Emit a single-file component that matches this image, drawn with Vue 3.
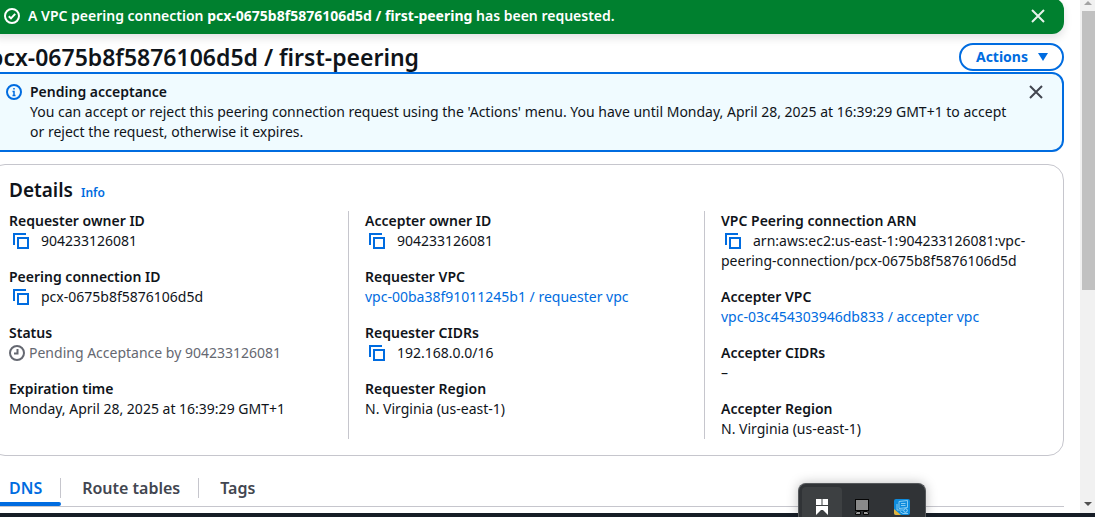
<script setup>
const columns = [
  [
    { label: 'Requester owner ID', value: '904233126081', kind: 'copy' },
    { label: 'Peering connection ID', value: 'pcx-0675b8f5876106d5d', kind: 'copy' },
    { label: 'Status', value: 'Pending Acceptance by 904233126081', kind: 'status' },
    { label: 'Expiration time', value: 'Monday, April 28, 2025 at 16:39:29 GMT+1' },
  ],
  [
    { label: 'Accepter owner ID', value: '904233126081', kind: 'copy' },
    { label: 'Requester VPC', value: 'vpc-00ba38f91011245b1 / requester vpc', kind: 'link' },
    { label: 'Requester CIDRs', value: '192.168.0.0/16', kind: 'copy' },
    { label: 'Requester Region', value: 'N. Virginia (us-east-1)' },
  ],
  [
    {
      label: 'VPC Peering connection ARN',
      value: 'arn:aws:ec2:us-east-1:904233126081:vpc-peering-connection/pcx-0675b8f5876106d5d',
      kind: 'copy',
    },
    { label: 'Accepter VPC', value: 'vpc-03c454303946db833 / accepter vpc', kind: 'link' },
    { label: 'Accepter CIDRs', value: '–' },
    { label: 'Accepter Region', value: 'N. Virginia (us-east-1)' },
  ],
]
const tabs = ['DNS', 'Route tables', 'Tags']
</script>

<template>
  <div class="screen">
    <div class="viewport">
      <main class="content">
        <div class="flash" role="status">
          <svg class="icon" viewBox="0 0 16 16" aria-hidden="true">
            <circle cx="8" cy="8" r="7" />
            <path d="M4.8 8.2 7 10.4 11.2 5.8" />
          </svg>
          <p class="flash-text">A VPC peering connection <b>pcx-0675b8f5876106d5d / first-peering</b> has been requested.</p>
          <button class="close" type="button" aria-label="Dismiss notification">
            <svg class="icon" viewBox="0 0 16 16" aria-hidden="true"><path d="M2 2 14 14M14 2 2 14" /></svg>
          </button>
        </div>

        <header class="page-header">
          <h1>pcx-0675b8f5876106d5d / first-peering</h1>
          <button class="actions" type="button">
            Actions
            <svg class="caret" viewBox="0 0 10 8" aria-hidden="true"><path d="M0 0H10L5 8Z" /></svg>
          </button>
        </header>

        <section class="alert">
          <svg class="icon" viewBox="0 0 16 16" aria-hidden="true">
            <circle cx="8" cy="8" r="7" />
            <path class="thin" d="M8 4V5.600M6.500 7.500H8V11.500M6.500 11.500H9.500" />
          </svg>
          <div class="alert-body">
            <h2>Pending acceptance</h2>
            <p>You can accept or reject this peering connection request using the 'Actions' menu. You have until Monday, April 28, 2025 at 16:39:29 GMT+1 to accept or reject the request, otherwise it expires.</p>
          </div>
          <button class="close" type="button" aria-label="Dismiss alert">
            <svg class="icon" viewBox="0 0 16 16" aria-hidden="true"><path d="M2 2 14 14M14 2 2 14" /></svg>
          </button>
        </section>

        <section class="details">
          <div class="details-head">
            <h2>Details</h2>
            <a href="#info">Info</a>
          </div>
          <div class="columns">
            <dl v-for="(column, i) in columns" :key="i" class="column">
              <div v-for="item in column" :key="item.label">
                <dt>{{ item.label }}</dt>
                <dd v-if="item.kind === 'copy'">
                  <button class="copy" type="button" :aria-label="'Copy ' + item.label">
                    <svg class="icon" viewBox="0 0 16 16" aria-hidden="true"><path d="M1 12V1H13M5 5H15V15H5Z" /></svg>
                  </button>{{ item.value }}
                </dd>
                <dd v-else-if="item.kind === 'link'"><a href="#vpc">{{ item.value }}</a></dd>
                <dd v-else-if="item.kind === 'status'" class="status">
                  <svg class="icon" viewBox="0 0 16 16" aria-hidden="true">
                    <circle cx="8" cy="8" r="7" />
                    <path d="M8.5 4V8.5H5" />
                  </svg>
                  {{ item.value }}
                </dd>
                <dd v-else>{{ item.value }}</dd>
              </div>
            </dl>
          </div>
        </section>

        <nav class="tabs" role="tablist">
          <button
            v-for="(tab, i) in tabs"
            :key="tab"
            class="tab"
            :class="{ active: i === 0 }"
            type="button"
            role="tab"
            :aria-selected="i === 0"
          ><span>{{ tab }}</span></button>
        </nav>
      </main>

      <div class="scrollbar" aria-hidden="true">
        <svg class="arrow up" viewBox="0 0 8 4"><path d="M0 4 4 0 8 4Z" /></svg>
        <div class="thumb"></div>
        <svg class="arrow" viewBox="0 0 8 4"><path d="M0 0 4 4 8 0Z" /></svg>
      </div>
    </div>

    <footer class="console-footer"></footer>

    <div class="dock">
      <button class="dock-item selected" type="button" aria-label="Start">
        <svg viewBox="0 0 16 16">
          <path fill="#fff" d="M2 0H7.500V6H2ZM8.500 0H14V6H8.500ZM2 7H7.500V10.500L2 16ZM8.500 7H14V16L8.500 10.500ZM7 7H9V11H7Z" />
        </svg>
      </button>
      <button class="dock-item" type="button" aria-label="Task view">
        <svg viewBox="0 0 16 16">
          <path fill="#050505" d="M1 0H15V12H1Z" />
          <path fill="#8a8a8a" d="M2 1H14V11H2Z" />
          <path fill="#9a9a9a" stroke="#050505" d="M3 12.500H6.500V15.500H1.500V14ZM9.500 12.500H13L14.500 14V15.500H9.500Z" />
        </svg>
      </button>
      <button class="dock-item" type="button" aria-label="Device settings">
        <svg viewBox="0 0 16 16">
          <rect width="16" height="16" rx="2" fill="#0d8bdd" />
          <path fill="#e2b33c" d="M0 10 7 16H2Q0 16 0 14Z" />
          <path fill="none" stroke="#a5dcf8" stroke-width="0.8" d="M5 2.500 13.500 1.500V8.500L5 9.500ZM3 5V11H9M7 4.500H11.500M7 6.500H11.500M6 12.500 9 14.500H14" />
          <circle cx="11.500" cy="11.500" r="1.800" fill="#0d8bdd" stroke="#a5dcf8" />
        </svg>
      </button>
    </div>
  </div>
</template>

<style>
body {
  margin: 0;
  background: #fff;
}
</style>

<style scoped>
.screen {
  position: relative;
  display: flex;
  flex-direction: column;
  height: 100vh;
  overflow: hidden;
  font: 14px/20px "Noto Sans", "Open Sans", sans-serif;
  color: #0f141a;
}
.viewport {
  display: flex;
  flex: 1;
  min-height: 0;
}
.content {
  flex: 1;
  min-width: 0;
  margin: -2px 16px 0 -11px;
}
h1, h2, p, dl, dd {
  margin: 0;
}
button {
  font: inherit;
  color: inherit;
  background: none;
  border: 0;
  padding: 0;
  cursor: pointer;
}
a {
  color: #006ce0;
  text-decoration: none;
}
.icon {
  display: block;
  flex: none;
  width: 16px;
  height: 16px;
  fill: none;
  stroke: currentColor;
  stroke-width: 2;
}
.thin {
  stroke-width: 1.5;
}
.flash {
  display: flex;
  align-items: center;
  gap: 8px;
  box-sizing: border-box;
  height: 36px;
  padding: 0 18px 0 15px;
  border-radius: 12px;
  background: #00802f;
  color: #fff;
  font-weight: 600;
  box-shadow: 0 4px 8px rgba(0, 7, 22, 0.12);
}
.flash-text {
  flex: 1;
}
.flash b {
  font-weight: 700;
}
.page-header {
  display: flex;
  align-items: center;
  justify-content: space-between;
  padding: 9px 0 1px;
}
h1 {
  font-size: 23px;
  line-height: 28px;
  font-weight: 600;
}
.actions {
  display: flex;
  align-items: center;
  gap: 10px;
  padding: 2px 14px 2px 15px;
  border: 2px solid #006ce0;
  border-radius: 20px;
  color: #006ce0;
  font-weight: 700;
}
.caret {
  width: 10px;
  height: 8px;
  fill: currentColor;
}
.alert {
  display: flex;
  gap: 8px;
  padding: 8px 18px 8px 15px;
  border: 2px solid #006ce0;
  border-radius: 12px;
  background: #f0fbff;
}
.alert .icon {
  margin-top: 2px;
}
.alert > .icon {
  color: #006ce0;
}
.alert-body {
  flex: 1;
  padding-right: 8px;
}
.alert h2 {
  font-size: 14px;
  line-height: 20px;
  font-weight: 600;
}
.close {
  align-self: flex-start;
}
.flash .close {
  align-self: center;
  opacity: 0.9;
}
.alert .close {
  color: #424650;
}
.details {
  margin-top: 12px;
  padding: 13px 20px 16px 19px;
  border: 1px solid #c6c6cd;
  border-radius: 16px;
}
.details-head {
  display: flex;
  align-items: baseline;
  gap: 8px;
  margin-bottom: 9px;
}
.details h2 {
  font-size: 19px;
  line-height: 24px;
  font-weight: 600;
}
.details-head a {
  font-size: 12px;
  line-height: 16px;
  font-weight: 600;
}
.columns {
  display: flex;
  gap: 17px;
}
.column {
  flex: 1 1 0;
  min-width: 0;
  display: flex;
  flex-direction: column;
  gap: 16px;
}
.column + .column {
  padding-left: 16px;
  border-left: 1px solid #c6c6cd;
}
dt {
  font-weight: 600;
}
.copy {
  display: inline-block;
  margin: 0 12px 0 4px;
  vertical-align: -3px;
  height: 16px;
  color: #006ce0;
}
.status {
  display: flex;
  align-items: center;
  gap: 4px;
  color: #656871;
}
.tabs {
  display: flex;
  height: 50px;
  border-bottom: 1px solid #c6c6cd;
}
.tab {
  position: relative;
  display: flex;
  align-items: center;
  padding: 13px 0 0;
  font-size: 16px;
  font-weight: 600;
  color: #424650;
}
.tab span {
  padding: 0 18px 0 21px;
  border-right: 1px solid #c6c6cd;
}
.tab:first-child span {
  padding-left: 20px;
}
.tab:last-child span {
  border: 0;
}
.tab.active {
  color: #006ce0;
}
.active::after {
  content: "";
  position: absolute;
  inset: auto 0 0 0;
  height: 4px;
  border-radius: 2px;
  background: #006ce0;
}
.scrollbar {
  display: flex;
  flex-direction: column;
  align-items: center;
  width: 15px;
  background: #f1f1f1;
}
.thumb {
  align-self: stretch;
  height: 279px;
  margin: 6px 0 auto 2px;
  background: #c1c1c1;
}
.arrow {
  width: 8px;
  height: 4px;
  margin: 0 0 7px;
  fill: #505050;
}
.up {
  margin: 1px 0 0;
  fill: #a3a3a3;
}
.console-footer {
  height: 4px;
  background: #161d26;
}
.dock {
  position: absolute;
  left: calc(73% - 1px);
  bottom: 0;
  display: flex;
  box-sizing: border-box;
  height: 34px;
  padding: 3px 3px 0;
  border: 1px solid #55585b;
  border-bottom: 0;
  border-radius: 8px 8px 0 0;
  background: #303336;
  box-shadow: 0 0 12px rgba(0, 0, 0, 0.25);
}
.dock-item {
  display: flex;
  justify-content: center;
  width: 40px;
  padding-top: 12px;
  border-radius: 4px 4px 0 0;
}
.selected {
  background: #3d4042;
}
.dock-item svg {
  width: 16px;
  height: 16px;
}
</style>
